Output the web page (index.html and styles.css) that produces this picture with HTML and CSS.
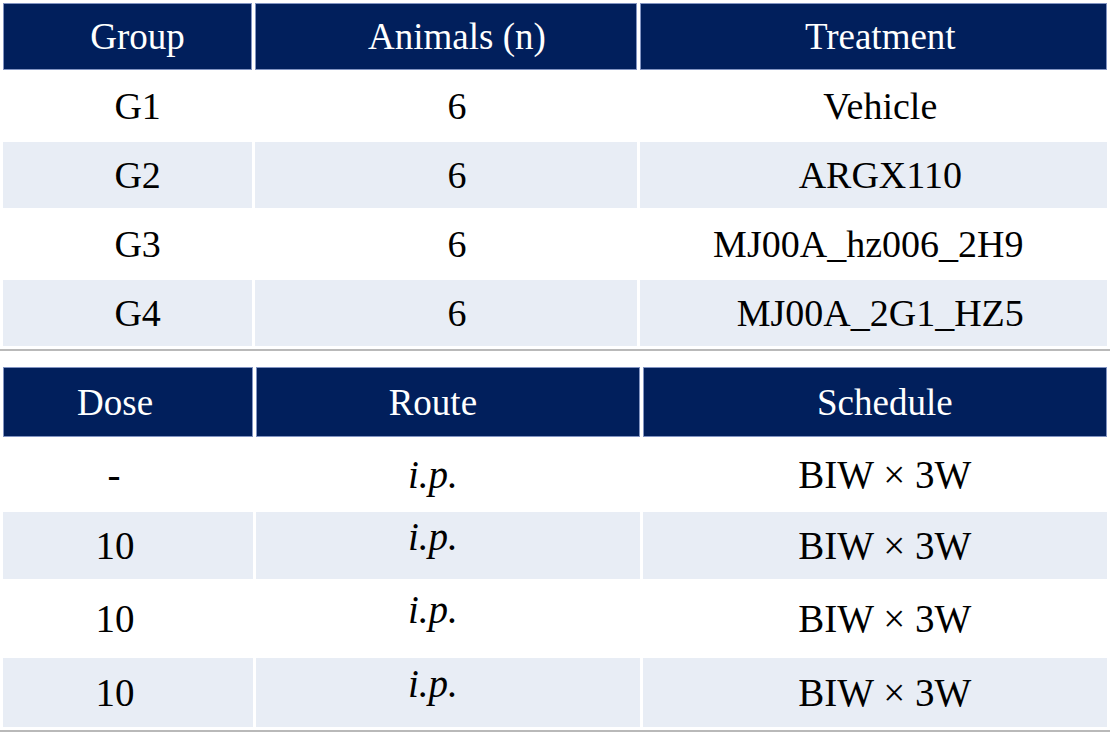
FILE: index.html
```html
<!DOCTYPE html>
<html>
<head>
<meta charset="utf-8">
<link rel="stylesheet" href="styles.css">
</head>
<body>
<div class="page">
  <div class="block block-top">
    <table class="grid top">
      <colgroup><col class="c1"><col class="c2"><col class="c3"></colgroup>
      <thead>
        <tr class="head"><th class="a">Group</th><th class="b">Animals (n)</th><th class="c">Treatment</th></tr>
      </thead>
      <tbody>
        <tr class="r1 plain"><td class="a">G1</td><td class="b">6</td><td class="c">Vehicle</td></tr>
        <tr class="r2 shade"><td class="a">G2</td><td class="b">6</td><td class="c">ARGX110</td></tr>
        <tr class="r3 plain"><td class="a">G3</td><td class="b">6</td><td class="c c-left">MJ00A_hz006_2H9</td></tr>
        <tr class="r4 shade"><td class="a">G4</td><td class="b">6</td><td class="c">MJ00A_2G1_HZ5</td></tr>
      </tbody>
    </table>
  </div>
  <div class="block block-bottom">
    <table class="grid bottom">
      <colgroup><col class="d1"><col class="d2"><col class="d3"></colgroup>
      <thead>
        <tr class="head"><th class="a">Dose</th><th class="b">Route</th><th class="c">Schedule</th></tr>
      </thead>
      <tbody>
        <tr class="s1 plain"><td class="a dash">-</td><td class="b"><i>i.p.</i></td><td class="c">BIW × 3W</td></tr>
        <tr class="s2 shade"><td class="a">10</td><td class="b raised"><i>i.p.</i></td><td class="c">BIW × 3W</td></tr>
        <tr class="s3 plain"><td class="a">10</td><td class="b raised"><i>i.p.</i></td><td class="c">BIW × 3W</td></tr>
        <tr class="s4 shade"><td class="a">10</td><td class="b raised"><i>i.p.</i></td><td class="c">BIW × 3W</td></tr>
      </tbody>
    </table>
  </div>
</div>
</body>
</html>
```

FILE: styles.css
```css
html, body {
  margin: 0;
  padding: 0;
  background: #ffffff;
}

.page {
  width: 1110px;
  height: 735px;
  overflow: hidden;
  font-family: "Liberation Serif", "Times New Roman", serif;
}

.block {
  border-bottom: 2px solid #b9b9b9;
}

.block-top {
  padding-top: 1px;
  padding-bottom: 1px;
}

.block-bottom {
  margin-top: 14px;
  padding-bottom: 1px;
}

.grid {
  width: 1110px;
  border-collapse: separate;
  border-spacing: 3px 2px;
  table-layout: fixed;
}

.grid th,
.grid td {
  padding: 0;
  text-align: center;
  vertical-align: middle;
  white-space: nowrap;
}

.grid th {
  background: #011f5c;
  color: #ffffff;
  font-weight: normal;
  font-size: 37px;
  border: 1px solid #8294c2;
}

.grid td {
  color: #000000;
  font-size: 38px;
}

.shade td {
  background: #e8edf5;
}

.plain td {
  background: #ffffff;
}

/* top table columns */
.c1 { width: 249px; }
.c2 { width: 381px; }
.c3 { width: 467px; }

.top .head th { height: 65px; }
.top .r1 td { height: 68px; }
.top .r2 td { height: 66px; }
.top .r3 td { height: 68px; }
.top .r4 td { height: 66px; }

.top .a { padding-left: 20px; }
.top .b { padding-left: 22px; }
.top .c { padding-left: 14px; }
.top .c-left { padding-left: 0; padding-right: 10px; }

/* bottom table columns */
.d1 { width: 250px; }
.d2 { width: 383px; }
.d3 { width: 464px; }

.bottom .head th { height: 68px; }
.bottom .s1 td { height: 71px; }
.bottom .s2 td { height: 67px; }
.bottom .s3 td { height: 75px; }
.bottom .s4 td { height: 69px; }

.bottom td { font-size: 39px; }
.bottom .a { padding-right: 26px; }
.bottom .b { padding-right: 30px; }
.bottom .c { padding-left: 20px; }
.bottom .dash { padding-right: 28px; }

.bottom .raised { padding-bottom: 18px; }
.bottom .s2 .raised { height: 49px; }
.bottom .s3 .raised { height: 57px; }
.bottom .s4 .raised { height: 51px; }
```
